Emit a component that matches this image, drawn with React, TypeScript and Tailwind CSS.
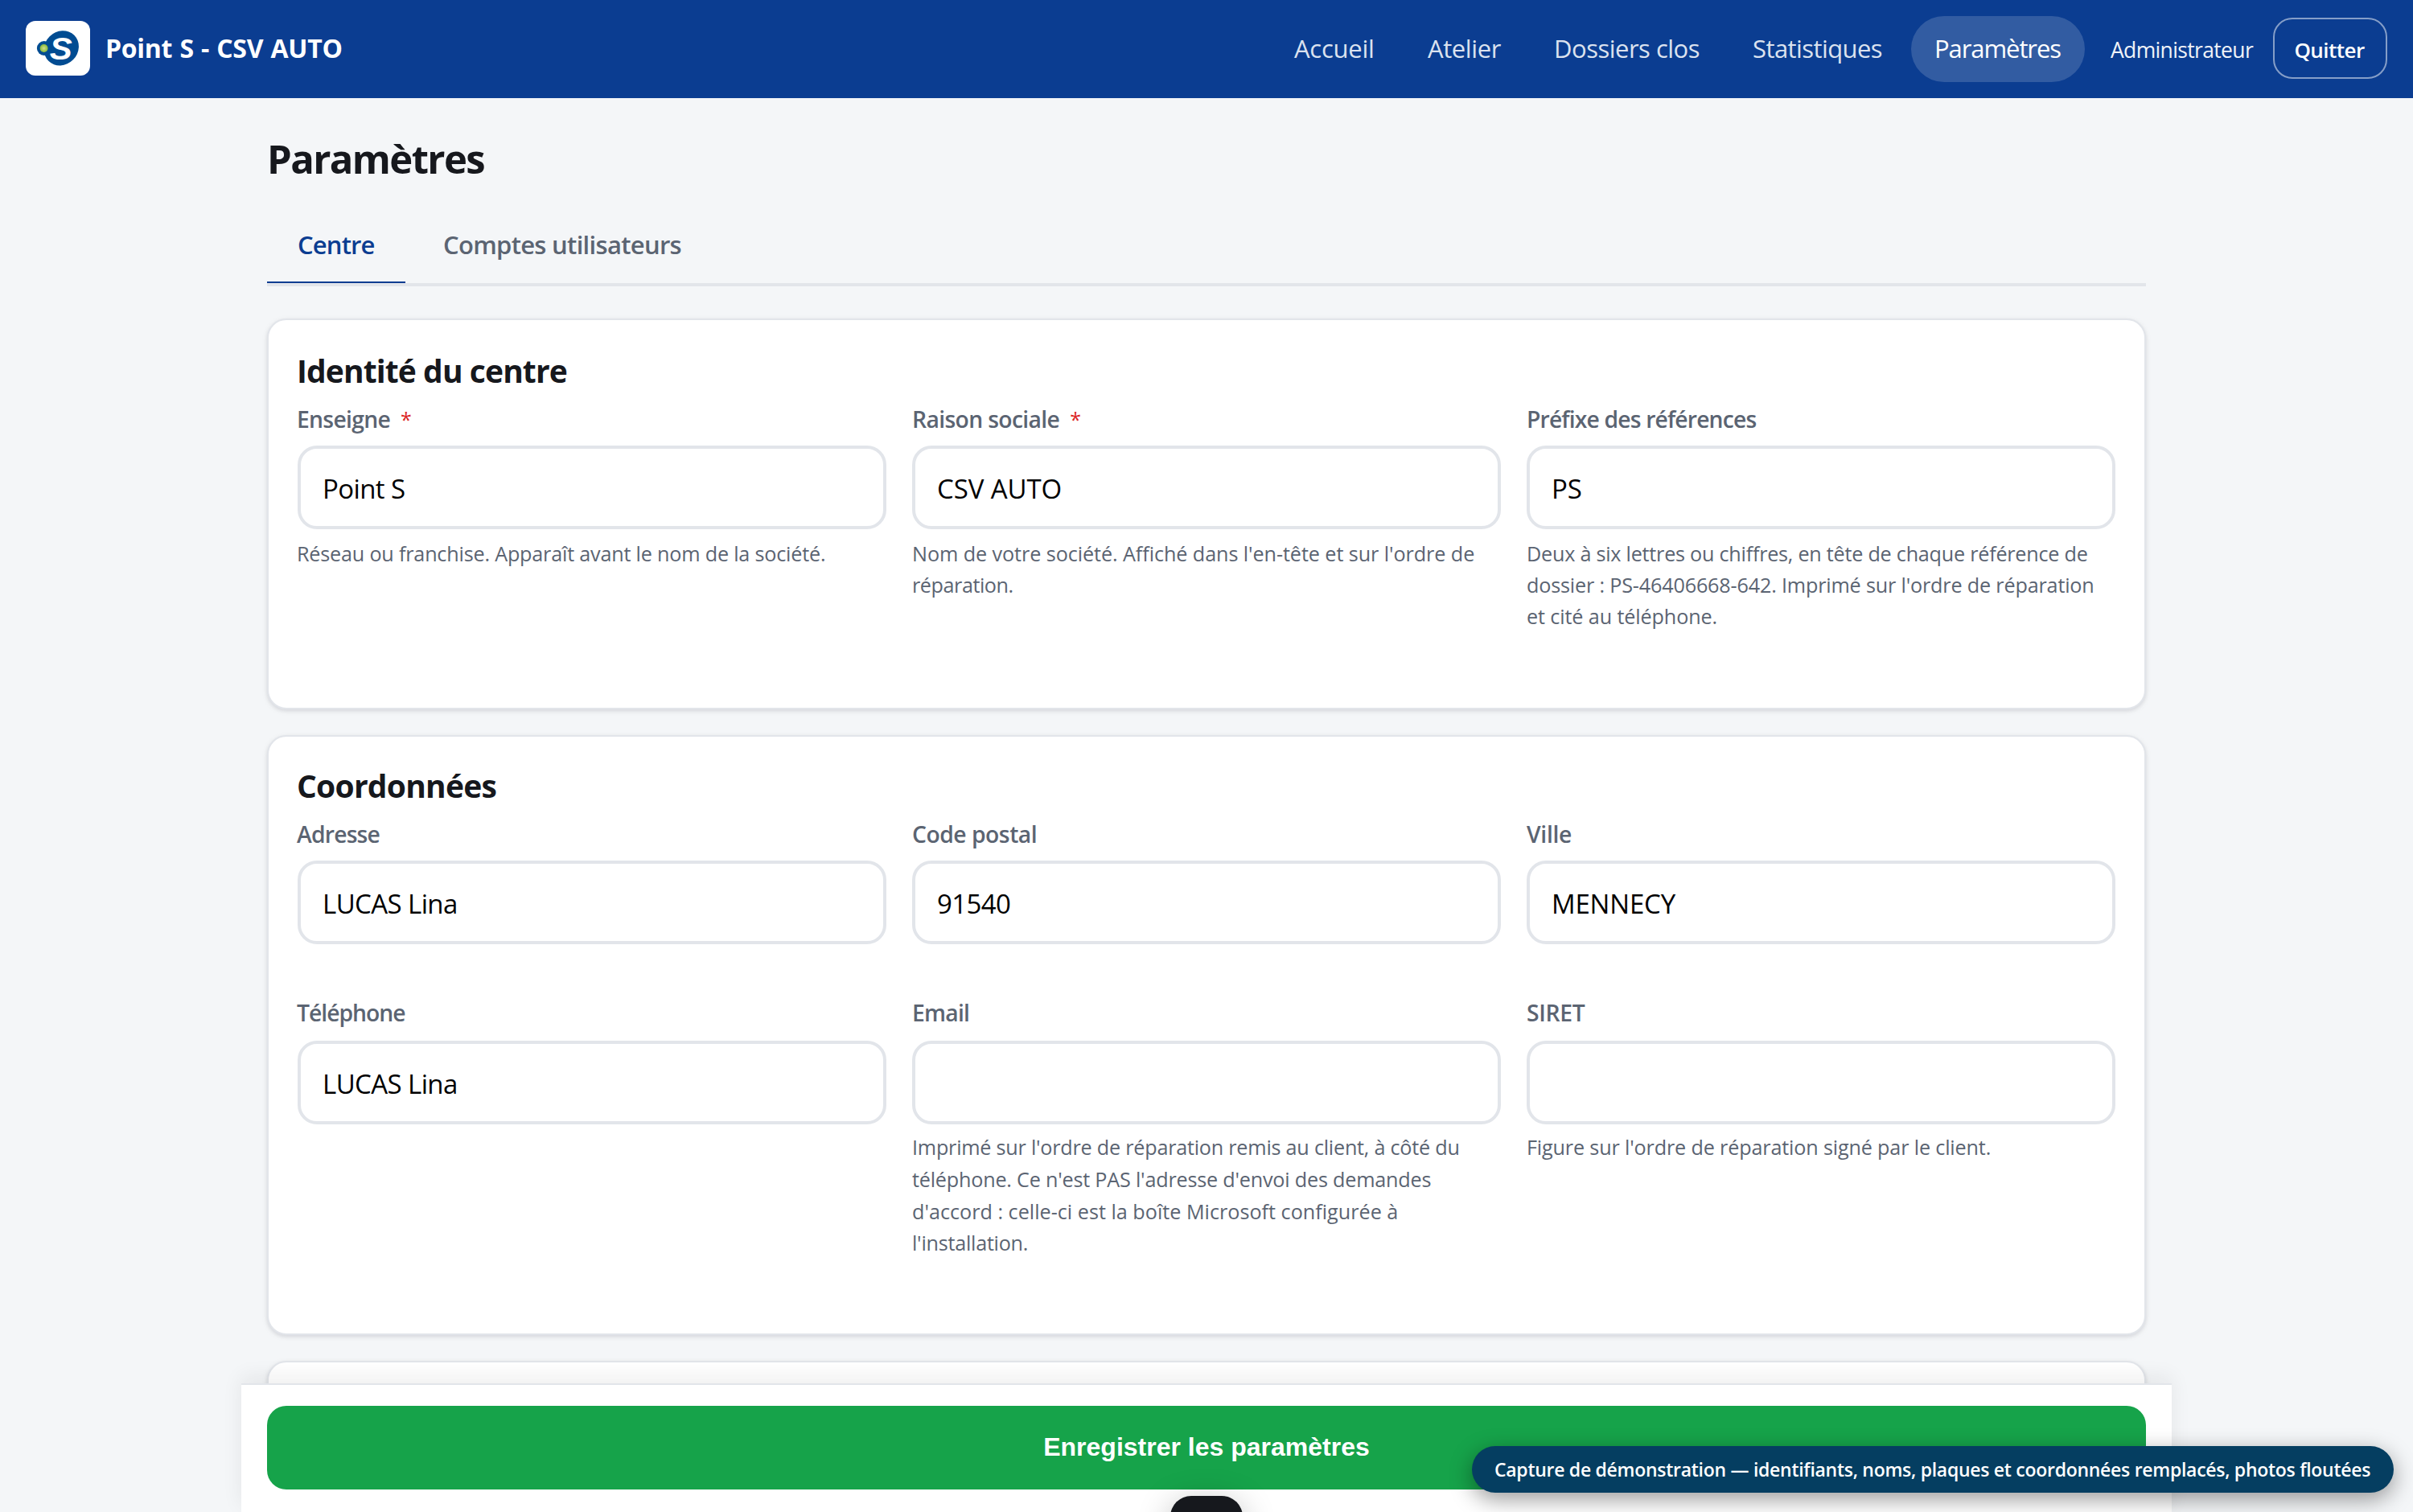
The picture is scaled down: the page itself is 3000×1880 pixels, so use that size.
import type { ReactNode } from "react";

function Logo() {
  return (
    <div className="flex h-[68px] w-[80px] shrink-0 items-center justify-center rounded-[12px] bg-white">
      <svg viewBox="0 0 54 46" className="h-[46px] w-[54px]">
        <defs>
          <radialGradient id="dot">
            <stop offset="0" stopColor="#d3df8a" />
            <stop offset="1" stopColor="#86b83c" />
          </radialGradient>
        </defs>
        <ellipse cx="31.3" cy="22.8" rx="22.6" ry="20.6" transform="rotate(-45 31.3 22.8)" fill="#014c92" />
        <circle cx="9.8" cy="23" r="8.9" fill="#014c92" />
        <circle cx="9.6" cy="23" r="5" fill="url(#dot)" />
        <text
          x="16.8"
          y="36.6"
          fontFamily="Liberation Sans, Arial, sans-serif"
          fontWeight="700"
          fontStyle="italic"
          fontSize="39"
          textLength="28"
          lengthAdjust="spacingAndGlyphs"
          fill="#ffffff"
        >
          S
        </text>
      </svg>
    </div>
  );
}

function Header() {
  return (
    <header className="flex h-[122px] shrink-0 items-center bg-[#0b3d91] px-8 text-[31px] text-[#dbe2ef]">
      <div className="-mt-[2px] flex items-center gap-[19px]">
        <Logo />
        <span className="text-[32px] font-bold tracking-[-0.28px] [word-spacing:1.2px] text-white">Point S - CSV AUTO</span>
      </div>
      <nav className="-mt-[1px] ml-auto flex items-center">
        <a className="-ml-px w-[167px] tracking-[-0.25px]">Accueil</a>
        <a className="-ml-px w-[157px] tracking-[-0.4px]">Atelier</a>
        <a className="w-[247px] tracking-[-0.5px]">Dossiers clos</a>
        <a className="w-[197px] tracking-[-0.58px]">Statistiques</a>
        <a className="-mb-[1px] flex h-[82px] w-[216px] items-center rounded-full bg-white/16 pb-[2px] pl-[29px] tracking-[-1.08px] text-white">
          Paramètres
        </a>
      </nav>
      <span className="ml-8 w-[202px] pt-[3px] text-[26.5px] tracking-[-0.65px] text-[#f0f3f8]">Administrateur</span>
      <button className="-mt-[2px] flex h-[76px] w-[142px] items-center justify-center rounded-[24px] border-2 border-white/50 pt-[4px] pr-[2px] text-[26px] font-semibold tracking-[-0.55px] text-white">
        Quitter
      </button>
    </header>
  );
}

function Card({ className = "", children }: { className?: string; children?: ReactNode }) {
  return (
    <section
      className={
        "rounded-[24px] border-2 border-[#e2e5ea] bg-white px-9 shadow-[0_2px_4px_rgba(22,24,40,0.09),0_2px_8px_rgba(22,24,40,0.06)] " +
        className
      }
    >
      {children}
    </section>
  );
}

function Field({
  label,
  labelClass,
  required,
  value,
  valueClass = "",
  boxClass = "mt-[13px]",
  children,
}: {
  label: string;
  labelClass: string;
  required?: boolean;
  value?: string;
  valueClass?: string;
  boxClass?: string;
  children?: ReactNode;
}) {
  return (
    <div>
      <div className="flex h-10 gap-[13px] text-[28.3px] leading-[40px] font-semibold text-[#5b6472]">
        <span className={labelClass}>{label}</span>
        {required && <span className="text-[25px] font-medium text-[#dc2626]">*</span>}
      </div>
      <div
        className={
          "flex h-[104px] items-center rounded-[24px] border-4 border-[#e2e5ea] bg-white px-[27px] pt-[4px] text-[33px] text-black " +
          boxClass
        }
      >
        <span className={valueClass}>{value}</span>
      </div>
      {children}
    </div>
  );
}

function Hint({ className, children }: { className: string; children: ReactNode }) {
  return <div className={"text-[25.2px] whitespace-nowrap text-[#5b6472] " + className}>{children}</div>;
}

export default function App() {
  return (
    <div className="relative flex h-[1880px] w-[3000px] flex-col overflow-hidden bg-[#f4f6f8] font-['Open_Sans',sans-serif] text-[#16181d]">
      <Header />
      <main className="mx-auto flex w-[2336px] flex-col">
        <h1 className="mt-[41px] h-[68px] text-[49px] leading-[68px] font-bold tracking-[-1.6px]">Paramètres</h1>
        <div className="mt-[33px] flex h-[92px] border-b-4 border-[#e2e5ea] text-[31px] leading-[80px] font-semibold">
          <div className="h-[88px] w-[172px] border-b-2 border-[#0b3d91] pl-[38px] tracking-[-0.85px] text-[#0b3d91]">
            Centre
          </div>
          <div className="pl-[47px] tracking-[-0.7px] text-[#5b6472]">Comptes utilisateurs</div>
        </div>

        <Card className="mt-10 h-[486px] pt-[36px]">
          <h2 className="-ml-px h-[54px] text-[39px] leading-[54px] font-bold tracking-[-0.9px]">Identité du centre</h2>
          <div className="mt-[13px] grid grid-cols-3 gap-x-8">
            <Field label="Enseigne" labelClass="-ml-px tracking-[-0.7px]" required value="Point S" valueClass="tracking-[-0.6px]">
              <Hint className="mt-[11px] -ml-px leading-[39px] tracking-[-0.2px]">
                Réseau ou franchise. Apparaît avant le nom de la société.
              </Hint>
            </Field>
            <Field label="Raison sociale" labelClass="tracking-[-0.65px]" required value="CSV AUTO" valueClass="tracking-[-0.1px]">
              <Hint className="mt-[11px] leading-[39px] tracking-[-0.08px]">
                Nom de votre société. Affiché dans l'en-tête et sur l'ordre de
              </Hint>
              <Hint className="leading-[39px] tracking-[-0.45px]">réparation.</Hint>
            </Field>
            <Field label="Préfixe des références" labelClass="tracking-[-0.85px]" value="PS" valueClass="tracking-[-0.15px]">
              <Hint className="mt-[11px] leading-[39px] tracking-[-0.24px]">
                Deux à six lettres ou chiffres, en tête de chaque référence de
              </Hint>
              <Hint className="leading-[39px] tracking-[-0.18px]">
                dossier : PS-46406668-642. Imprimé sur l'ordre de réparation
              </Hint>
              <Hint className="leading-[39px] tracking-[-0.12px]">et cité au téléphone.</Hint>
            </Field>
          </div>
        </Card>

        <Card className="mt-8 h-[746px] pt-[34px]">
          <h2 className="-ml-px h-[54px] text-[39px] leading-[54px] font-bold tracking-[-0.75px]">Coordonnées</h2>
          <div className="mt-[13px] grid h-[222px] grid-cols-3 gap-x-8">
            <Field label="Adresse" labelClass="-ml-px tracking-[-0.8px]" value="LUCAS Lina" valueClass="tracking-[-0.6px]" />
            <Field label="Code postal" labelClass="tracking-[-0.5px]" value="91540" valueClass="tracking-[-0.6px]" />
            <Field label="Ville" labelClass="tracking-[-0.3px]" value="MENNECY" valueClass="tracking-[-0.2px]" />
          </div>
          <div className="grid grid-cols-3 gap-x-8">
            <Field
              label="Téléphone"
              labelClass="-ml-px tracking-[-1px]"
              boxClass="mt-[15px]"
              value="LUCAS Lina"
              valueClass="tracking-[-0.6px]"
            />
            <Field label="Email" labelClass="tracking-[-0.75px]" boxClass="mt-[15px]">
              <Hint className="mt-[9px] leading-[39px] tracking-[-0.23px]">
                Imprimé sur l'ordre de réparation remis au client, à côté du
              </Hint>
              <Hint className="leading-[41px] tracking-[-0.21px]">
                téléphone. Ce n'est PAS l'adresse d'envoi des demandes
              </Hint>
              <Hint className="leading-[39px]">d'accord : celle-ci est la boîte Microsoft configurée à</Hint>
              <Hint className="leading-[38px] tracking-[-0.25px]">l'installation.</Hint>
            </Field>
            <Field label="SIRET" labelClass="tracking-[-0.3px]" boxClass="mt-[15px]">
              <Hint className="mt-[9px] leading-[39px] tracking-[-0.16px]">
                Figure sur l'ordre de réparation signé par le client.
              </Hint>
            </Field>
          </div>
        </Card>

        <Card className="mt-8 h-[300px]" />
      </main>

      <div className="absolute bottom-0 left-[300px] h-[160px] w-[2400px] border-t-2 border-[#e2e5ea] bg-white px-8 pt-[26px] shadow-[0_-8px_24px_rgba(22,24,29,0.07)]">
        <button className="flex h-[104px] w-full items-center justify-center rounded-[24px] bg-[#16a34a] pb-[2px] font-['Liberation_Sans',Arial,sans-serif] text-[32px] font-bold text-white">
          Enregistrer les paramètres
        </button>
      </div>

      <div className="absolute top-[1860px] left-[1455px] h-[90px] w-[90px] rounded-[26px] bg-[#16181d] shadow-[0_8px_40px_rgba(0,0,0,0.25)]" />

      <div className="absolute right-6 bottom-6 flex h-[58px] w-[1146px] items-center rounded-full bg-[#053e61] pt-px pl-7 text-[23px] font-semibold tracking-[-0.28px] whitespace-nowrap text-white shadow-[0_8px_28px_rgba(0,0,0,0.4)]">
        Capture de démonstration — identifiants, noms, plaques et coordonnées remplacés, photos floutées
      </div>
    </div>
  );
}
